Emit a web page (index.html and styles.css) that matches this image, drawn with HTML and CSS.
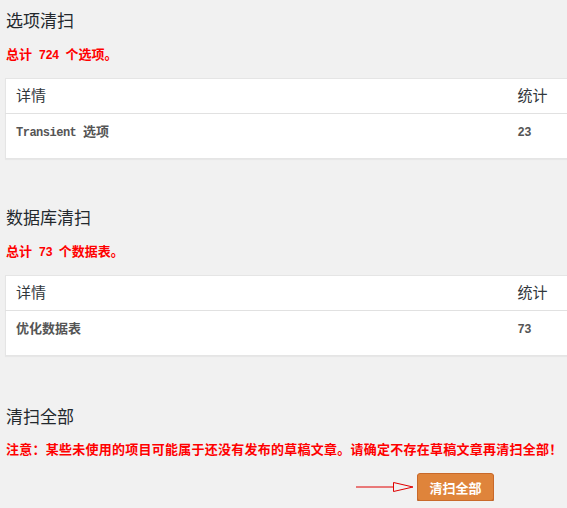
FILE: index.html
```html
<!DOCTYPE html>
<html lang="zh-CN">
<head>
<meta charset="UTF-8" />
<title>清扫</title>
<link rel="stylesheet" href="styles.css">
</head>
<body>

<div class="wrap">
  <!-- 选项清扫 -->
  <div class="section">
    <h2>选项清扫</h2>
    <p class="total">总计<span class="en"> 724 </span>个选项。</p>
    <table class="widefat">
      <thead>
        <tr><th>详情</th><th class="col-count">统计</th></tr>
      </thead>
      <tbody>
        <tr><td><span class="en">Transient </span>选项</td><td class="col-count"><span class="en">23</span></td></tr>
      </tbody>
    </table>
  </div>

  <!-- 数据库清扫 -->
  <div class="section">
    <h2>数据库清扫</h2>
    <p class="total">总计<span class="en"> 73 </span>个数据表。</p>
    <table class="widefat">
      <thead>
        <tr><th>详情</th><th class="col-count">统计</th></tr>
      </thead>
      <tbody>
        <tr><td>优化数据表</td><td class="col-count"><span class="en">73</span></td></tr>
      </tbody>
    </table>
  </div>

  <!-- 清扫全部 -->
  <div class="section last">
    <h2>清扫全部</h2>
    <p class="total notice">注意：某些未使用的项目可能属于还没有发布的草稿文章。请确定不存在草稿文章再清扫全部！</p>
    <div class="actions">
      <svg class="arrow" width="58" height="12" viewBox="0 0 58 12">
        <line x1="0" y1="6" x2="37" y2="6" stroke="#e00000" stroke-width="1" />
        <polygon points="37.5,1.5 57,6 37.5,10.5" fill="none" stroke="#e00000" stroke-width="1" />
      </svg>
      <button class="button-sweep">清扫全部</button>
    </div>
  </div>
</div>

</body>
</html>
```

FILE: styles.css
```css
html, body {
  margin: 0;
  padding: 0;
  background: #f1f1f1;
  overflow-x: hidden;
  color: #444;
  font-family: "Noto Sans CJK SC", sans-serif;
}

.wrap {
  padding: 0 0 0 6px;
  width: 620px;
}

.section h2 {
  margin: 8px 0 0;
  font-size: 17px;
  line-height: 24px;
  font-weight: normal;
  color: #23282d;
}
.section + .section {
  margin-top: 46px;
}
.section.last {
  margin-top: 48px;
}

.total {
  margin: 13px 0 0;
  font-size: 13px;
  line-height: 18px;
  font-weight: bold;
  color: #ff0000;
  font-family: "Noto Sans CJK SC", sans-serif;
}
.notice {
  margin-top: 12px;
  letter-spacing: 0.25px;
}
.en {
  font-family: "Liberation Mono", monospace;
  font-size: 12px;
  font-weight: bold;
  white-space: pre;
}
.total .en {
  letter-spacing: -0.5px;
}

/* 表格 */
.widefat {
  margin: 13px 0 0 -1px;
  width: 620px;
  border-collapse: collapse;
  background: #fff;
  border: 1px solid #e5e5e5;
  box-shadow: 0 1px 1px rgba(0, 0, 0, 0.04);
}
.widefat th {
  height: 35px;
  padding: 0 10px 3px;
  text-align: left;
  font-size: 15px;
  font-weight: normal;
  color: #32373c;
  border-bottom: 1px solid #e1e1e1;
  box-sizing: border-box;
}
.widefat td {
  height: 45px;
  padding: 7px 10px 0;
  vertical-align: top;
  font-size: 13px;
  line-height: 20px;
  font-weight: bold;
  color: #555;
  box-sizing: border-box;
}
.widefat td .en {
  letter-spacing: -0.5px;
}
.widefat .col-count {
  width: 117px;
}

.actions {
  display: flex;
  align-items: center;
  margin: 15px 0 0 350px;
}
.arrow {
  display: block;
  margin-right: 3px;
}
.button-sweep {
  width: 77px;
  height: 28px;
  padding: 0;
  font-family: "Noto Sans CJK SC", sans-serif;
  font-size: 13px;
  font-weight: bold;
  color: #fff;
  background: #df843b;
  border: 1px solid #c9692a;
  border-radius: 3px;
  box-shadow: 0 1px 0 #b45f26;
}
```
